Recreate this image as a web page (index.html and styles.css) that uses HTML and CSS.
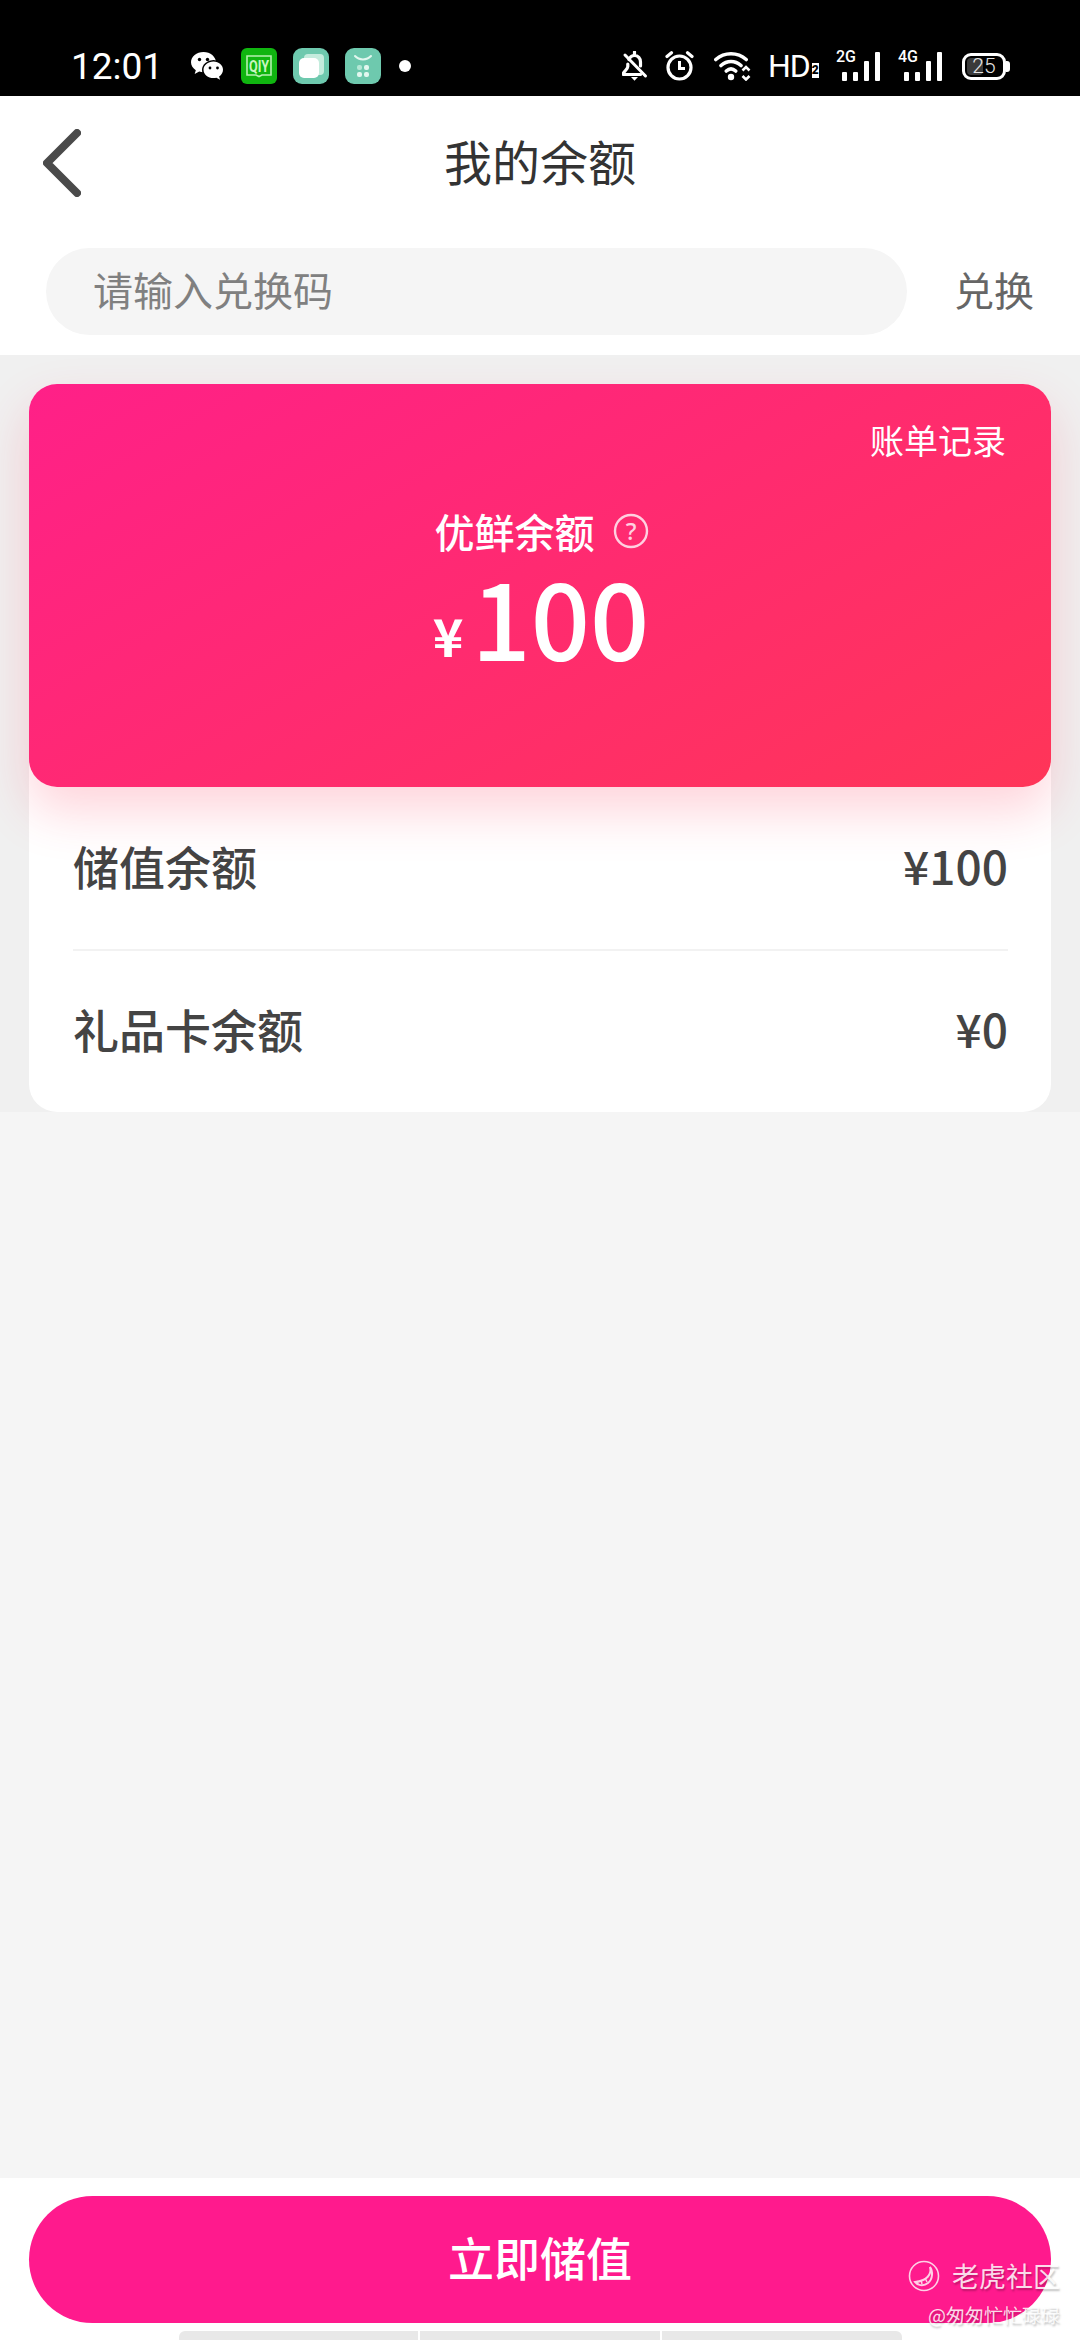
FILE: index.html
```html
<!DOCTYPE html>
<html lang="zh-CN">
<head>
    <meta charset="UTF-8">
    <meta name="viewport" content="width=device-width, initial-scale=1.0">
    <title>我的余额</title>
    <link rel="stylesheet" href="styles.css">
</head>
<body>

<!-- Status bar -->
<div class="status-bar">
    <div class="status-left">
        <span class="status-time">12:01</span>
        <svg class="icon-wechat" width="33" height="29" viewBox="0 0 33 29">
            <path d="M12.500 0C5.600 0 0 4.600 0 10.300c0 3.300 1.900 6 4.800 7.900L3.700 22l4.500-2.400c1.400.4 2.800.6 4.300.6 6.900 0 12.500-4.500 12.500-9.900S19.400 0 12.500 0z" fill="#fff"/>
            <ellipse cx="22.500" cy="18" rx="11.500" ry="10" fill="#000"/>
            <path d="M22.500 9.500c-5.500 0-10 3.700-10 8.300s4.500 8.300 10 8.300c1 0 2-.1 2.900-.4l3.700 2-1-3.200c2.400-1.500 3.900-3.900 3.900-6.700 0-4.600-4.100-8.300-9.500-8.300z" fill="#fff"/>
            <circle cx="8.500" cy="7.500" r="1.700" fill="#000"/>
            <circle cx="16.500" cy="7.500" r="1.700" fill="#000"/>
            <circle cx="19" cy="16" r="1.400" fill="#000"/>
            <circle cx="26.500" cy="16" r="1.400" fill="#000"/>
        </svg>
        <svg class="icon-app" width="36" height="36" viewBox="0 0 36 36">
            <rect width="36" height="36" rx="6" fill="#10b510"/>
            <path d="M6 8h24v19H21l-3 1.500-3-1.500H6z" fill="none" stroke="#b5f0b0" stroke-width="1.600"/>
            <text x="18" y="24" class="qiyi-text" textLength="20" lengthAdjust="spacingAndGlyphs">QIY</text>
        </svg>
        <svg class="icon-app" width="36" height="36" viewBox="0 0 36 36">
            <rect width="36" height="36" rx="9" fill="#6ec9ae"/>
            <rect x="11" y="6" width="20" height="21" rx="4" fill="#c4ecdd"/>
            <rect x="6" y="10" width="20" height="20" rx="5" fill="#fff"/>
        </svg>
        <svg class="icon-app" width="36" height="36" viewBox="0 0 36 36">
            <rect width="36" height="36" rx="9" fill="#6ec9ae"/>
            <path d="M10 8c4 4.500 12 4.500 16 0" fill="none" stroke="#e2f7ef" stroke-width="2" stroke-linecap="round"/>
            <rect x="12" y="17" width="5" height="5" rx="2" fill="#b5e8d6"/>
            <rect x="19" y="17" width="5" height="5" rx="2" fill="#e2f7ef"/>
            <rect x="12" y="24" width="5" height="5" rx="2" fill="#e2f7ef"/>
            <rect x="19" y="24" width="5" height="5" rx="2" fill="#e2f7ef"/>
        </svg>
        <span class="status-dot"></span>
    </div>
    <div class="status-right">
        <svg class="icon-bell" width="26" height="30" viewBox="0 0 26 30">
            <path d="M12.500 1v3M7 8.500C8 6 10 4.500 12.500 4.500c3.500 0 6 3 6 6.500v4M5.800 13v2.500c0 2-2.500 4-4.300 6.500v1.500h17" fill="none" stroke="#fff" stroke-width="3.200" stroke-linecap="round" stroke-linejoin="round"/>
            <path d="M3 4l20.500 21" stroke="#fff" stroke-width="3" stroke-linecap="round"/>
            <path d="M9 26h7L12.500 29.800z" fill="#fff"/>
        </svg>
        <svg class="icon-alarm" width="29" height="30" viewBox="0 0 29 30">
            <circle cx="14.500" cy="16.500" r="11.500" fill="none" stroke="#fff" stroke-width="3.200"/>
            <path d="M14.500 10v7.500h5.500" fill="none" stroke="#fff" stroke-width="3"/>
            <path d="M2 5.500L6.500 1.800M27 5.500L22.500 1.800" stroke="#fff" stroke-width="3.200" stroke-linecap="round"/>
        </svg>
        <svg class="icon-wifi" width="39" height="30" viewBox="0 0 39 30">
            <path d="M1.800 8.500C10.500.8 23.500.8 32.200 8.500M7 14.500c6-5.300 14-5.300 20 0M12.300 20c3-2.700 6.400-2.700 9.400 0" fill="none" stroke="#fff" stroke-width="3.600" stroke-linecap="round"/>
            <circle cx="17" cy="26" r="3.200" fill="#fff"/>
            <path d="M28.500 19.500l3.500-3.500 3.500 3.500M28.500 25l3.500 3.500 3.500-3.500" fill="none" stroke="#fff" stroke-width="2.600"/>
        </svg>
        <span class="status-hd">HD<b class="sim-badge">2</b></span>
        <div class="signal">
            <span class="signal-label">2G</span>
            <i class="bar bar-1"></i><i class="bar bar-2"></i><i class="bar bar-3"></i><i class="bar bar-4"></i>
        </div>
        <div class="signal">
            <span class="signal-label">4G</span>
            <i class="bar bar-1"></i><i class="bar bar-2"></i><i class="bar bar-3"></i><i class="bar bar-4"></i>
        </div>
        <div class="battery">
            <span class="battery-level"></span>
            <span class="battery-text">25</span>
        </div>
    </div>
</div>

<!-- Title bar -->
<header class="nav-bar">
    <svg class="back-icon" width="38" height="68" viewBox="0 0 38 68">
        <path d="M34 4L4 34l30 30" fill="none" stroke="#4a4a4a" stroke-width="8" stroke-linecap="round" stroke-linejoin="round"/>
    </svg>
    <h1>我的余额</h1>
</header>

<!-- Redeem code -->
<div class="redeem-row">
    <div class="redeem-input">请输入兑换码</div>
    <span class="redeem-button">兑换</span>
</div>

<!-- Balance -->
<section class="balance-section">
    <div class="balance-panel">
        <div class="balance-card">
            <a class="bill-link">账单记录</a>
            <div class="balance-label">
                优鲜余额
                <svg width="36" height="36" viewBox="0 0 36 36">
                    <circle cx="18" cy="18" r="16" fill="none" stroke="#ffd0e0" stroke-width="2.400"/>
                    <text x="18" y="26.500" class="help-mark">?</text>
                </svg>
            </div>
            <div class="balance-amount"><span class="currency">¥</span>100</div>
        </div>
        <div class="balance-row">
            <span>储值余额</span>
            <span>¥100</span>
        </div>
        <div class="balance-row">
            <span>礼品卡余额</span>
            <span>¥0</span>
        </div>
    </div>
</section>

<div class="spacer"></div>

<!-- Bottom action -->
<footer class="bottom-bar">
    <button class="recharge-button">立即储值</button>
    <div class="home-strip">
        <span></span><span></span><span></span>
    </div>
</footer>

<!-- Image watermark -->
<div class="watermark">
    <div class="watermark-main">
        <svg width="32" height="32" viewBox="0 0 32 32">
            <circle cx="16" cy="16" r="14.500" fill="none" stroke="#ffd0e6" stroke-width="1.600"/>
            <path d="M22 7c2 7-3 14-15 15 2 3 8 5 13 1 5-4 5-12 2-16z" fill="none" stroke="#ffd0e6" stroke-width="2"/>
            <path d="M9 21l1 3M13 20l1 4M17 18l2 4" stroke="#ffd0e6" stroke-width="1.500"/>
        </svg>
        <span>老虎社区</span>
    </div>
    <div class="watermark-sub">@匆匆忙忙碌碌</div>
</div>

</body>
</html>
```

FILE: styles.css
```css
* {
    margin: 0;
    padding: 0;
    box-sizing: border-box;
}

body {
    width: 1080px;
    height: 2340px;
    position: relative;
    overflow: hidden;
    display: flex;
    flex-direction: column;
    font-family: 'Noto Sans CJK SC', 'Noto Sans', sans-serif;
    background-color: #f5f5f5;
    color: #444;
}

/* Status bar */
.status-bar {
    height: 96px;
    flex-shrink: 0;
    background-color: #000;
    color: #fff;
    display: flex;
    justify-content: space-between;
    align-items: flex-end;
    padding: 0 74px 12px 71px;
}

.status-left {
    display: flex;
    align-items: center;
    height: 36px;
}

.status-time {
    font-family: 'Roboto', sans-serif;
    font-size: 37px;
    font-weight: 400;
    width: 120px;
}

.icon-wechat {
    margin-right: 17px;
}

.icon-app {
    margin-right: 16px;
}

.qiyi-text {
    font-family: 'Roboto', sans-serif;
    font-size: 17px;
    font-weight: 700;
    fill: #c8f5c0;
    text-anchor: middle;
}

.status-dot {
    width: 12px;
    height: 12px;
    margin-left: 2px;
    border-radius: 50%;
    background-color: #fff;
}

.status-right {
    display: flex;
    align-items: center;
    height: 36px;
}

.icon-bell {
    margin-right: 17px;
}

.icon-alarm {
    margin-right: 20px;
}

.icon-wifi {
    margin-right: 15px;
}

.status-hd {
    font-family: 'Roboto', sans-serif;
    font-size: 32px;
    font-weight: 400;
    line-height: 36px;
    width: 50px;
    margin-right: 18px;
    letter-spacing: -1px;
    display: flex;
    align-items: flex-end;
}

.sim-badge {
    font-size: 12px;
    font-weight: 900;
    line-height: 15px;
    width: 11px;
    height: 15px;
    margin-bottom: 6px;
    margin-left: 2px;
    text-align: center;
    letter-spacing: 0;
    background-color: #fff;
    color: #000;
}

.signal {
    position: relative;
    width: 44px;
    height: 30px;
    margin-right: 18px;
    display: flex;
    justify-content: flex-end;
    align-items: flex-end;
    gap: 6px;
}

.signal-label {
    position: absolute;
    left: 0;
    top: -2px;
    font-family: 'Roboto', sans-serif;
    font-size: 16px;
    line-height: 16px;
    font-weight: 500;
}

.bar {
    width: 5px;
    border-radius: 1px;
    background-color: #fff;
}

.bar-1,
.bar-2 {
    height: 9px;
}

.bar-3 {
    height: 20px;
}

.bar-4 {
    height: 29px;
}

.battery {
    position: relative;
    width: 44px;
    height: 27px;
    border: 3px solid #fff;
    border-radius: 9px;
    margin-left: 2px;
    display: flex;
    align-items: center;
    justify-content: center;
}

.battery::after {
    content: '';
    position: absolute;
    right: -7px;
    top: 5px;
    width: 4px;
    height: 11px;
    border-radius: 0 3px 3px 0;
    background-color: #fff;
}

.battery-level {
    position: absolute;
    left: 2px;
    top: 2px;
    bottom: 2px;
    width: 16px;
    border-radius: 4px;
    background-color: #3a3a3a;
}

.battery-text {
    position: relative;
    font-family: 'Roboto', sans-serif;
    font-size: 21px;
    font-weight: 300;
    color: #e4e4e4;
}

/* Title bar */
.nav-bar {
    position: relative;
    height: 130px;
    flex-shrink: 0;
    padding-bottom: 3px;
    background-color: #fff;
    display: flex;
    justify-content: center;
    align-items: center;
}

.nav-bar h1 {
    font-size: 48px;
    font-weight: 400;
    color: #333;
}

.back-icon {
    position: absolute;
    left: 43px;
    top: 33px;
}

/* Redeem code */
.redeem-row {
    height: 129px;
    flex-shrink: 0;
    background-color: #fff;
    display: flex;
    align-items: flex-start;
    padding: 22px 46px 0 46px;
}

.redeem-input {
    width: 861px;
    height: 87px;
    padding-left: 47px;
    border-radius: 44px;
    background-color: #f5f5f5;
    color: #808080;
    font-size: 40px;
    line-height: 82px;
}

.redeem-button {
    margin-left: auto;
    color: #666;
    font-size: 40px;
    line-height: 82px;
}

/* Balance */
.balance-section {
    height: 757px;
    flex-shrink: 0;
    padding: 29px 29px 0;
    background-color: #f0f0f0;
}

.balance-panel {
    height: 728px;
    border-radius: 28px;
    background-color: #fff;
}

.balance-card {
    position: relative;
    height: 403px;
    padding: 30px 45px 0;
    border-radius: 28px;
    background: linear-gradient(150deg, #ff2088 0%, #ff3558 100%);
    box-shadow: 0 24px 50px rgba(255, 60, 90, 0.22);
    color: #fff;
    display: flex;
    flex-direction: column;
    align-items: center;
}

.bill-link {
    align-self: flex-end;
    font-size: 34px;
    line-height: 52px;
}

.balance-label {
    margin-top: 39px;
    padding-left: 3px;
    font-size: 40px;
    line-height: 52px;
    font-weight: 500;
    display: flex;
    align-items: center;
    gap: 18px;
}

.help-mark {
    font-family: 'Noto Sans', sans-serif;
    font-size: 24px;
    fill: #ffd0e0;
    text-anchor: middle;
}

.balance-amount {
    font-size: 104px;
    line-height: 108px;
    font-weight: 500;
    margin-top: 5px;
    padding-left: 2px;
}

.currency {
    font-size: 52px;
    margin-right: 8px;
    font-weight: 700;
    vertical-align: 4px;
}

.balance-row {
    height: 162px;
    margin: 0 43px 0 44px;
    padding-bottom: 7px;
    display: flex;
    justify-content: space-between;
    align-items: center;
    font-size: 46px;
    font-weight: 500;
    color: #444;
}

.balance-row + .balance-row {
    height: 163px;
    border-top: 2px solid #f2f2f2;
}

.spacer {
    flex: 1;
}

/* Bottom action */
.bottom-bar {
    height: 162px;
    flex-shrink: 0;
    background-color: #fff;
    padding: 18px 29px 0;
    display: flex;
    flex-direction: column;
    align-items: center;
}

.recharge-button {
    width: 1022px;
    height: 127px;
    flex-shrink: 0;
    padding-bottom: 7px;
    border: none;
    border-radius: 64px;
    background-color: #ff1a8d;
    color: #fff;
    font-family: inherit;
    font-size: 46px;
    font-weight: 500;
}

.home-strip {
    width: 723px;
    height: 9px;
    margin-top: 8px;
    flex-shrink: 0;
    display: flex;
    gap: 2px;
    border-radius: 6px 6px 0 0;
    overflow: hidden;
}

.home-strip span {
    flex: 1;
    background-color: #e8e8e8;
}

/* Image watermark */
.watermark {
    position: absolute;
    right: 20px;
    bottom: 12px;
    display: flex;
    flex-direction: column;
    align-items: flex-end;
    color: rgba(255, 255, 255, 0.85);
    text-shadow: 1px 2px 2px rgba(0, 0, 0, 0.25);
}

.watermark-main {
    display: flex;
    align-items: center;
    gap: 12px;
    font-size: 27px;
    line-height: 36px;
}

.watermark-sub {
    margin-top: 8px;
    font-size: 19px;
    line-height: 26px;
}
```
